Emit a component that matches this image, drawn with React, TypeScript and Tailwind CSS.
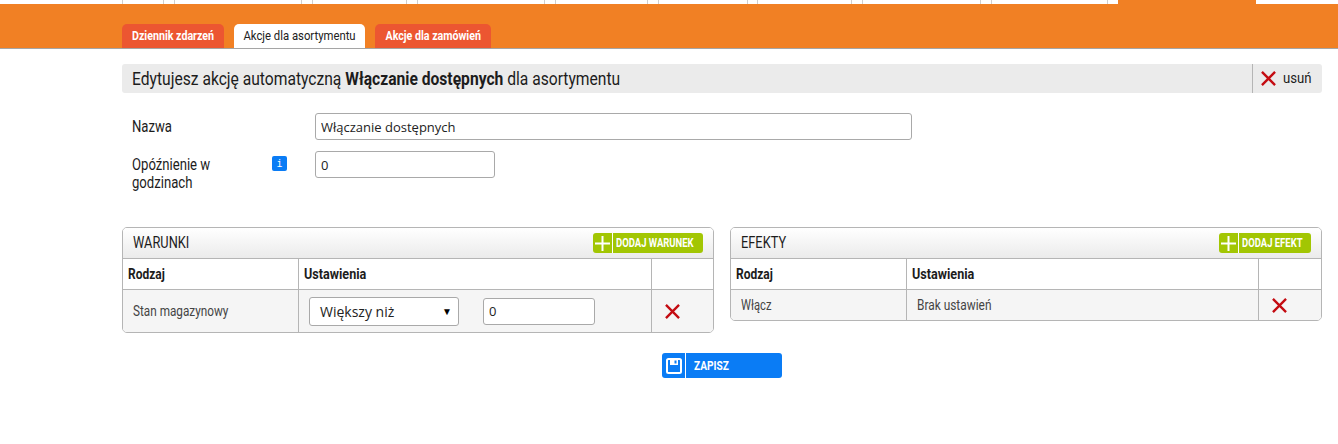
const sans = "font-['Roboto',sans-serif]"
const field = "border border-[#a9a9a9] rounded-[3px] px-[5px] text-[13px] font-['Open_Sans',sans-serif] text-[#222]"

const nav = [41, 11, 127, 11, 94, 11, 127, 11, 92, 11, 89, 10, 94, 11, 118, 11, 116, 11]

const CrossIcon = ({ size = 16 }: { size?: number }) => (
    <svg width={size} height={size} viewBox="0 0 16 16" className="shrink-0">
        <path d="M1 1 L15 15 M15 1 L1 15" stroke="#c40c12" strokeWidth="2.5" fill="none" />
    </svg>
)

const PlusIcon = () => (
    <svg width="15" height="15" viewBox="0 0 15 15">
        <path d="M7.5 0 V15 M0 7.5 H15" stroke="#fff" strokeWidth="2" fill="none" />
    </svg>
)

const SaveIcon = () => (
    <svg width="16" height="16" viewBox="0 0 16 16">
        <rect x="1" y="1" width="14" height="14" rx="1.5" stroke="#fff" strokeWidth="2" fill="none" />
        <path d="M4 1 H12 V7 H4 Z" fill="#fff" />
        <rect x="8.5" y="2.5" width="2" height="3" fill="#0a7cf5" />
    </svg>
)

const AddButton = ({ label, width }: { label: string; width: string }) => (
    <button className={`h-5 flex items-center rounded-[3px] bg-[#a2c603] text-white ${width}`}>
        <span className="w-5 h-5 flex items-center justify-center border-r border-white shrink-0">
            <PlusIcon />
        </span>
        <span className="ml-[3px] inline-block origin-left scale-x-[0.79] text-[12px] font-bold whitespace-nowrap">{label}</span>
    </button>
)

const Tab = ({ label, active, width, scale }: { label: string; active?: boolean; width: string; scale: string }) => (
    <div
        className={`h-6 ${width} rounded-t-[5px] flex items-center justify-center text-[13px] ${
            active ? "bg-white text-[#222]" : "bg-[#ec5631] text-white font-bold"
        }`}
    >
        <span className={`inline-block whitespace-nowrap ${scale}`}>{label}</span>
    </div>
)

const Head = ({ grid }: { grid: string }) => (
    <div className={`grid ${grid} h-[31px] border-b border-[#b5b5b5] text-[15px] font-bold`}>
        <div className="pl-[5px] flex items-center border-r border-[#b5b5b5]">
            <span className="inline-block origin-left scale-x-[0.8]">Rodzaj</span>
        </div>
        <div className="pl-[5px] flex items-center border-r border-[#b5b5b5]">
            <span className="inline-block origin-left scale-x-[0.84]">Ustawienia</span>
        </div>
        <div />
    </div>
)

const App = () => {
    return (
        <div className={`w-[1338px] h-[444px] bg-white overflow-hidden ${sans} text-[#1c1c1c]`}>
            {/* TOP STRIP */}
            <div className="h-[4px] pl-[122px] flex">
                {nav.map((w, i) => (
                    <div key={i} className="border-l border-[#cfcfcf]" style={{ width: w }} />
                ))}
                <div className="w-[138px] bg-[#f18024]" />
            </div>

            {/* ORANGE HEADER */}
            <div className="h-[45px] bg-[#f18024] border-b border-[#a5a5a5] pl-[122px] flex items-end gap-[10px]">
                <Tab label="Dziennik zdarzeń" width="w-[102px]" scale="scale-x-[0.82]" />
                <Tab label="Akcje dla asortymentu" active width="w-[131px]" scale="scale-x-[0.87]" />
                <Tab label="Akcje dla zamówień" width="w-[116px]" scale="scale-x-[0.82]" />
            </div>

            <div className="pl-[122px] pr-[16px]">
                {/* TITLE */}
                <div className="mt-[15px] h-[29px] bg-[#ebebeb] rounded-[3px] flex items-center justify-between">
                    <h1 className="pl-[10px] text-[18px]">
                        <span className="inline-block origin-left scale-x-[0.868] whitespace-nowrap">
                            Edytujesz akcję automatyczną <b>Włączanie dostępnych</b> dla asortymentu
                        </span>
                    </h1>
                    <div className="h-full w-[70px] border-l border-[#b5b5b5] flex items-center pl-[8px] gap-[7px] text-[15px]">
                        <CrossIcon size={15} />
                        <span className="inline-block origin-left scale-x-[0.875]">usuń</span>
                    </div>
                </div>

                {/* FORM */}
                <div className="mt-[20px] pl-[10px] flex items-center">
                    <label className="w-[183px] text-[16px]">
                        <span className="inline-block origin-left scale-x-[0.82]">Nazwa</span>
                    </label>
                    <input readOnly value="Włączanie dostępnych" className={`w-[597px] h-[27px] ${field}`} />
                </div>
                <div className="mt-[11px] pl-[10px] flex items-start">
                    <label className="w-[140px] mt-[5px] text-[16px] leading-[18px]">
                        <span className="inline-block origin-left scale-x-[0.82] whitespace-nowrap">
                            Opóźnienie w
                            <br />
                            godzinach
                        </span>
                    </label>
                    <span className="mt-[5px] w-[15px] h-[15px] rounded-[2px] bg-[#0a7cf5] text-white text-[10px] font-['DejaVu_Sans_Mono',monospace] flex items-center justify-center">
                        i
                    </span>
                    <span className="w-[28px]" />
                    <input readOnly value="0" className={`w-[180px] h-[27px] ${field}`} />
                </div>

                {/* TABLES */}
                <div className="mt-[35px] flex items-start gap-[16px]">
                    <div className="w-[592px] border border-[#b5b5b5] rounded-[5px] overflow-hidden">
                        <div className="h-[31px] px-[10px] flex items-center justify-between border-b border-[#b5b5b5] bg-gradient-to-b from-white to-[#ebebeb]">
                            <span className="inline-block origin-left scale-x-[0.8] text-[16px]">WARUNKI</span>
                            <AddButton label="DODAJ WARUNEK" width="w-[110px]" />
                        </div>
                        <Head grid="grid-cols-[176px_353px_1fr]" />
                        <div className="grid grid-cols-[176px_353px_1fr] h-[42px] bg-[#f5f5f5] text-[14px] text-[#444]">
                            <div className="pl-[10px] flex items-center border-r border-[#b5b5b5]">
                                <span className="inline-block origin-left scale-x-[0.84] whitespace-nowrap">Stan magazynowy</span>
                            </div>
                            <div className="pl-[10px] flex items-center gap-[24px] border-r border-[#b5b5b5]">
                                <div className="w-[150px] h-[29px] bg-white border border-[#a9a9a9] rounded-[3px] pl-[10px] pr-[6px] flex items-center justify-between font-['Open_Sans',sans-serif] text-[14px] text-[#222]">
                                    Większy niż
                                    <span className="text-[10px] text-black">▼</span>
                                </div>
                                <input readOnly value="0" className={`w-[112px] h-[27px] bg-white ${field}`} />
                            </div>
                            <div className="pl-[13px] flex items-center">
                                <CrossIcon size={15} />
                            </div>
                        </div>
                    </div>

                    <div className="w-[592px] border border-[#b5b5b5] rounded-[5px] overflow-hidden">
                        <div className="h-[31px] px-[10px] flex items-center justify-between border-b border-[#b5b5b5] bg-gradient-to-b from-white to-[#ebebeb]">
                            <span className="inline-block origin-left scale-x-[0.8] text-[16px]">EFEKTY</span>
                            <AddButton label="DODAJ EFEKT" width="w-[92px]" />
                        </div>
                        <Head grid="grid-cols-[176px_352px_1fr]" />
                        <div className="grid grid-cols-[176px_352px_1fr] h-[30px] bg-[#f5f5f5] text-[14px] text-[#444]">
                            <div className="pl-[10px] flex items-center border-r border-[#b5b5b5]">
                                <span className="inline-block origin-left scale-x-[0.8]">Włącz</span>
                            </div>
                            <div className="pl-[10px] flex items-center border-r border-[#b5b5b5]">
                                <span className="inline-block origin-left scale-x-[0.85] whitespace-nowrap">Brak ustawień</span>
                            </div>
                            <div className="pl-[13px] flex items-center">
                                <CrossIcon size={15} />
                            </div>
                        </div>
                    </div>
                </div>
            </div>

            {/* SAVE */}
            <div className="mt-[20px] pl-[662px]">
                <button className="w-[120px] h-[25px] rounded-[3px] bg-[#0a7cf5] text-white flex items-center">
                    <span className="w-[24px] h-full flex items-center justify-center border-r border-white">
                        <SaveIcon />
                    </span>
                    <span className="ml-[8px] inline-block origin-left scale-x-[0.78] text-[13px] font-bold">ZAPISZ</span>
                </button>
            </div>
        </div>
    )
}

export default App
